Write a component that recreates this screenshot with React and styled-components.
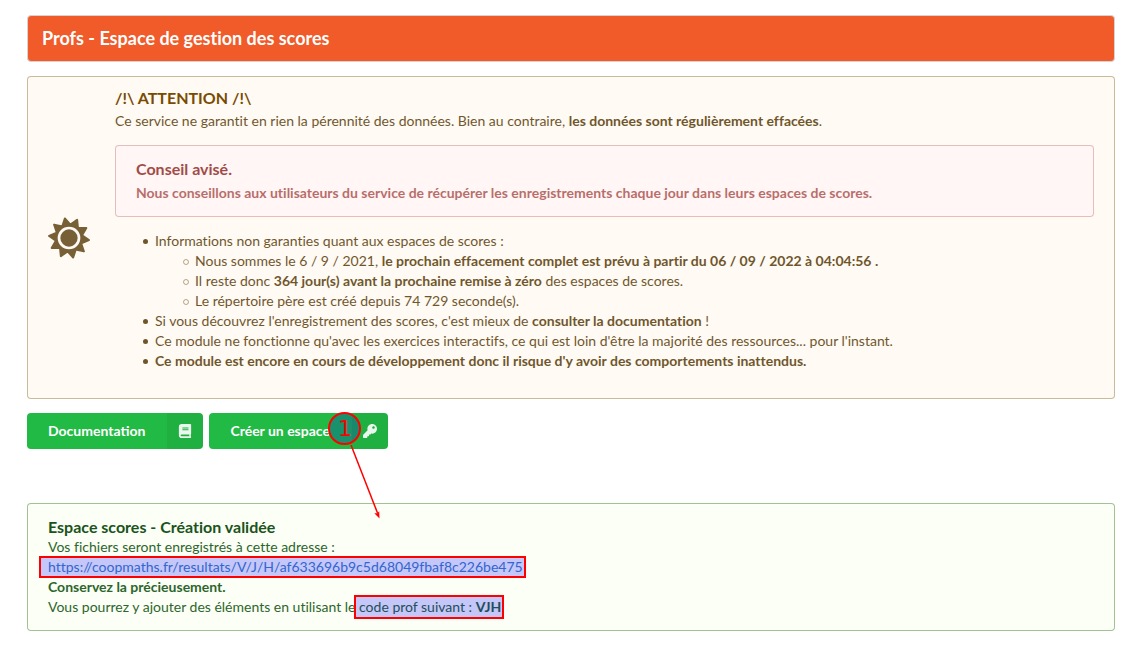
import React from "react";
import styled, { createGlobalStyle } from "styled-components";
import { FaBook, FaKey } from "react-icons/fa";

const GlobalStyle = createGlobalStyle`
  *, *::before, *::after { box-sizing: border-box; }
  body {
    margin: 0;
    background: #fff;
    color: rgba(0, 0, 0, 0.87);
    font: 14px/20px Lato, "Liberation Sans", sans-serif;
    font-variant-ligatures: none;
  }
  p, h1, h2, h3, ul { margin: 0; }
`;

const Page = styled.main`
  padding: 15px 17px 20px 27px;
`;

const Banner = styled.header`
  padding: 13px 14px;
  border: 1px solid #d4d4d5;
  border-radius: 4px;
  background: #f15a29;
`;

const BannerTitle = styled.h1`
  color: #fff;
  font-size: 18px;
  line-height: 19px;
`;

const tones = {
  warning: { background: "#fffaf3", border: "#c9ba9b", text: "#573a08", title: "#794b02" },
  error: { background: "#fff6f6", border: "#e0b4b4", text: "#9f3a38", title: "#912d2b" },
  success: { background: "#fcfff5", border: "#a3c293", text: "#2c662d", title: "#1a531b" },
};

const Message = styled.section`
  padding: 14px 21px;
  border-radius: 4px;
  background: ${({ $tone }) => tones[$tone].background};
  box-shadow: 0 0 0 1px ${({ $tone }) => tones[$tone].border} inset;
  color: ${({ $tone }) => tones[$tone].text};
`;

const IconMessage = styled(Message)`
  display: flex;
  align-items: center;
  gap: 25px;
  margin-top: 14px;
`;

const MessageBody = styled.div`
  flex: 1;
  min-width: 0;
`;

const MessageTitle = styled.h2`
  color: ${({ $tone }) => tones[$tone].title};
  font-size: 16px;
  line-height: ${({ $compact }) => ($compact ? "16px" : "20px")};
`;

const Faded = styled.div`
  opacity: 0.85;
`;

const Paragraph = styled.p`
  margin-top: 4px;
  opacity: ${({ $faded }) => ($faded ? 0.85 : 1)};
`;

const Intro = styled(Paragraph)`
  margin-top: 5px;
`;

const Advice = styled(Message)`
  margin: 14px 0;
`;

const BulletList = styled.ul`
  margin-bottom: 14px;
  padding-left: 40px;
  list-style: none;
`;

const SubList = styled(BulletList)`
  margin-bottom: 0;
`;

const Bullet = styled.li`
  position: relative;

  &::before {
    content: "";
    position: absolute;
    top: 8px;
    left: -12px;
    width: 5px;
    height: 5px;
    border-radius: 50%;
    background: currentColor;
  }
`;

const SubBullet = styled(Bullet)`
  &::before {
    width: 6px;
    height: 6px;
    border: 1px solid currentColor;
    background: none;
    opacity: 0.5;
  }
`;

const SunIcon = styled.svg`
  flex: none;
  width: 42px;
  height: 42px;
  opacity: 0.8;
`;

const Actions = styled.div`
  display: flex;
  gap: 6px;
  margin: 14px 0 54px;
`;

const Action = styled.div`
  position: relative;
`;

const Button = styled.button`
  display: flex;
  align-items: center;
  height: 36px;
  padding: 0 0 0 21px;
  border: 0;
  border-radius: 4px;
  overflow: hidden;
  background: #21ba45;
  color: #fff;
  font: bold 14px/14px Lato, "Liberation Sans", sans-serif;
  cursor: pointer;
`;

const ButtonIcon = styled.span`
  display: grid;
  place-items: center;
  width: 36px;
  height: 36px;
  margin-left: 22px;
  background: rgba(0, 0, 0, 0.05);

  svg {
    width: 14px;
    height: 14px;
    opacity: 0.9;
  }
`;

const StepBadge = styled.span`
  position: absolute;
  top: -1px;
  left: 119px;
  width: 33px;
  height: 33px;
  border: 2px solid #f00;
  border-radius: 50%;
  background: rgba(0, 0, 255, 0.22);
  color: #f00;
  font: 22px/29px "DejaVu Sans", sans-serif;
  text-align: center;
`;

const StepArrow = styled.svg`
  position: absolute;
  top: 30px;
  left: 139px;
  width: 36px;
  height: 78px;
`;

const highlight = `
  position: relative;

  &::after {
    content: "";
    position: absolute;
    border: 2px solid #f00;
    background: rgba(0, 0, 255, 0.22);
    background-clip: padding-box;
    pointer-events: none;
  }
`;

const ResultLink = styled.a`
  ${highlight}
  display: inline-block;
  color: #4183c4;
  text-decoration: none;

  &::after { inset: -1px -3px -1px -9px; }
`;

const TeacherCode = styled.span`
  ${highlight}
  display: inline-block;

  &::after { inset: -2px -3px -2px -5px; }
`;

const rayPoints = Array.from({ length: 20 }, (_, i) => {
  const angle = ((i * 18 - 12) * Math.PI) / 180;
  const radius = i % 2 ? 13.4 : 20;
  return `${(21 + radius * Math.sin(angle)).toFixed(2)},${(21 - radius * Math.cos(angle)).toFixed(2)}`;
}).join(" ");

function Sun() {
  return (
    <SunIcon viewBox="0 0 42 42" aria-hidden="true">
      <polygon points={rayPoints} fill="#573a08" stroke="#573a08" strokeWidth="2" strokeLinejoin="round" />
      <circle cx="21" cy="21" r="10" fill="#573a08" stroke="#fffaf3" strokeWidth="2.7" />
    </SunIcon>
  );
}

export default function App() {
  return (
    <>
      <GlobalStyle />
      <Page>
        <Banner>
          <BannerTitle>Profs - Espace de gestion des scores</BannerTitle>
        </Banner>

        <IconMessage $tone="warning">
          <Sun />
          <MessageBody>
            <MessageTitle $tone="warning" $compact>/!\ ATTENTION /!\</MessageTitle>
            <Faded>
              <Intro>
                Ce service ne garantit en rien la pérennité des données. Bien au contraire,{" "}
                <b>les données sont régulièrement effacées</b>.
              </Intro>
              <Advice $tone="error">
                <MessageTitle $tone="error">Conseil avisé.</MessageTitle>
                <Paragraph $faded>
                  <b>
                    Nous conseillons aux utilisateurs du service de récupérer les enregistrements
                    chaque jour dans leurs espaces de scores.
                  </b>
                </Paragraph>
              </Advice>
              <BulletList>
                <Bullet>
                  Informations non garanties quant aux espaces de scores :
                  <SubList>
                    <SubBullet>
                      Nous sommes le 6 / 9 / 2021,{" "}
                      <b>le prochain effacement complet est prévu à partir du 06 / 09 / 2022 à 04:04:56 .</b>
                    </SubBullet>
                    <SubBullet>
                      Il reste donc <b>364 jour(s) avant la prochaine remise à zéro</b> des espaces de
                      scores.
                    </SubBullet>
                    <SubBullet>Le répertoire père est créé depuis 74 729 seconde(s).</SubBullet>
                  </SubList>
                </Bullet>
                <Bullet>
                  Si vous découvrez l'enregistrement des scores, c'est mieux de{" "}
                  <b>consulter la documentation</b> !
                </Bullet>
                <Bullet>
                  Ce module ne fonctionne qu'avec les exercices interactifs, ce qui est loin d'être la
                  majorité des ressources... pour l'instant.
                </Bullet>
                <Bullet>
                  <b>
                    Ce module est encore en cours de développement donc il risque d'y avoir des
                    comportements inattendus.
                  </b>
                </Bullet>
              </BulletList>
            </Faded>
          </MessageBody>
        </IconMessage>

        <Actions>
          <Action>
            <Button type="button">
              Documentation
              <ButtonIcon><FaBook /></ButtonIcon>
            </Button>
          </Action>
          <Action>
            <Button type="button">
              Créer un espace
              <ButtonIcon><FaKey /></ButtonIcon>
            </Button>
            <StepBadge>1</StepBadge>
            <StepArrow viewBox="0 0 36 78" aria-hidden="true">
              <path d="M3 2 L29.5 70" stroke="#f00" strokeWidth="1.5" fill="none" />
              <path d="M31.5 75.5 L26.3 70.3 L29.3 70.2 L31.2 68.3 Z" fill="#f00" />
            </StepArrow>
          </Action>
        </Actions>

        <Message $tone="success">
          <MessageTitle $tone="success">Espace scores - Création validée</MessageTitle>
          <p>Vos fichiers seront enregistrés à cette adresse :</p>
          <p>
            <ResultLink href="https://coopmaths.fr/resultats/V/J/H/af633696b9c5d68049fbaf8c226be475">
              https://coopmaths.fr/resultats/V/J/H/af633696b9c5d68049fbaf8c226be475
            </ResultLink>
          </p>
          <p><b>Conservez la précieusement.</b></p>
          <p>
            Vous pourrez y ajouter des éléments en utilisant le{" "}
            <TeacherCode>code prof suivant : <b>VJH</b></TeacherCode>
          </p>
        </Message>
      </Page>
    </>
  );
}
